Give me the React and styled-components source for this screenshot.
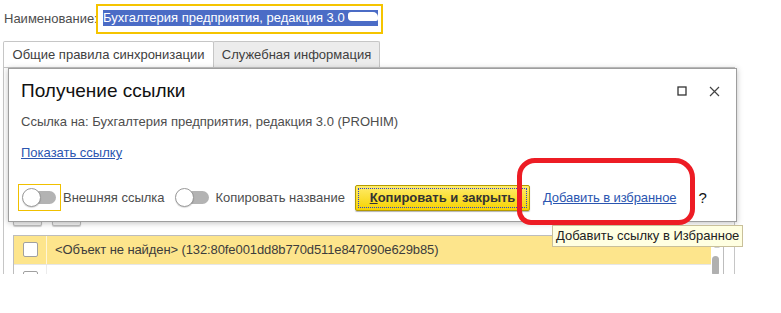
import React from "react";
import styled, {createGlobalStyle} from "styled-components";

const GlobalStyle = createGlobalStyle`
    html, body {
        margin: 0;
        padding: 0;
        background: #fff;
    }
    body {
        font-family: "Liberation Sans", Arial, sans-serif;
        font-size: 13px;
        color: #4d4d4d;
    }
`;

const Page = styled.div`
    position: relative;
    width: 781px;
    height: 313px;
    overflow: hidden;
    background: #fff;
`;

const Form = styled.div`
    display: flex;
    flex-direction: column;
    height: 274px;
    overflow: hidden;
`;

const NameRow = styled.div`
    display: flex;
    align-items: center;
    height: 30px;
    margin-top: 4px;
    padding-left: 4px;
`;

const Label = styled.span`
    width: 92px;
    line-height: 16px;
`;

const NameInput = styled.div`
    box-sizing: border-box;
    width: 287px;
    height: 30px;
    border: 2px solid #f5c400;
    padding: 4px 3px 4px 5px;
    overflow: hidden;
    white-space: nowrap;
`;

const Selection = styled.div`
    display: flex;
    align-items: center;
    height: 16px;
    background: #4b6cc6;
    color: #fff;
    line-height: 16px;
`;

/* white scribble that hides the end of the name in the screenshot */
const Redacted = styled.span`
    display: inline-block;
    width: 32px;
    height: 9px;
    margin: -4px 0 0 3px;
    border-radius: 3px 5px 2px 4px;
    background: #fff;
    color: #fff;
    font-size: 6px;
    line-height: 9px;
    overflow: hidden;
`;

const TabBar = styled.div`
    display: flex;
    height: 26px;
    margin-top: 7px;
    padding-left: 3px;
`;

const Tab = styled.div`
    box-sizing: border-box;
    width: ${({w}) => w}px;
    height: 26px;
    margin-left: ${({first}) => (first ? 0 : -1)}px;
    border: 1px solid #c6c6c6;
    border-bottom: none;
    border-radius: 2px 2px 0 0;
    background: ${({active}) => (active ? "#fff" : "#ececec")};
    color: #404040;
    text-align: center;
    line-height: 25px;
`;

const Panel = styled.div`
    flex: 1;
    margin: 0 46px 0 3px;
    border: 1px solid #c6c6c6;
    border-bottom: none;
    padding: 0 10px 0 9px;
`;

const Toolbar = styled.div`
    display: flex;
    gap: 10px;
    margin-top: 133px;
`;

const ToolButton = styled.div`
    box-sizing: border-box;
    width: 29px;
    height: 25px;
    border: 1px solid #bdbdbd;
    border-radius: 2px;
    background: #f2f2f2;
    box-shadow: 0 1px 1px rgba(0, 0, 0, 0.2);
`;

const Table = styled.div`
    display: flex;
    margin-top: 9px;
    border: 1px solid #bdbdbd;
    border-bottom: none;
    height: 60px;
`;

const Rows = styled.div`
    flex: 1;
`;

const Row = styled.div`
    display: flex;
    height: 28px;
    background: ${({selected}) => (selected ? "#fde58c" : "#fff")};
    border-bottom: 1px solid #e6e6e6;
`;

const CheckCell = styled.div`
    width: 33px;
    padding: 6px 0 0 9px;
    box-sizing: border-box;
    border-right: 1px solid ${({selected}) => (selected ? "#fff6d8" : "#ececec")};
`;

const Checkbox = styled.div`
    box-sizing: border-box;
    width: 15px;
    height: 15px;
    border: 1px solid #a0a0a0;
    border-radius: 2px;
    background: #fff;
`;

const TextCell = styled.div`
    padding-left: 8px;
    line-height: 28px;
    color: #3c3c3c;
    letter-spacing: -0.1px;
`;

const ScrollBar = styled.div`
    width: 12px;
`;

const ScrollArrow = styled.div`
    margin: 9px 0 0 3px;
    width: 0;
    height: 0;
    border-left: 3px solid transparent;
    border-right: 3px solid transparent;
    border-bottom: 3px solid #d0d0d0;
`;

const ScrollThumb = styled.div`
    width: 7px;
    height: 20px;
    margin: 8px 0 0 1px;
    border-radius: 4px;
    background: #b0b0b0;
`;

const Dialog = styled.div`
    position: absolute;
    left: 8px;
    top: 68px;
    box-sizing: border-box;
    width: 729px;
    height: 154px;
    border: 1px solid #9e9e9e;
    background: #fff;
    box-shadow: 0 1px 6px rgba(0, 0, 0, 0.25);
    padding: 10px 16px 0 12px;
    display: flex;
    flex-direction: column;
`;

const Header = styled.div`
    display: flex;
    align-items: center;
    justify-content: space-between;
    height: 24px;
`;

const Title = styled.div`
    font-size: 19px;
    line-height: 24px;
    color: #111;
`;

const WindowButtons = styled.div`
    display: flex;
    align-items: center;
    gap: 22px;
`;

const Text = styled.div`
    margin-top: ${({mt}) => mt}px;
    line-height: 16px;
`;

const Link = styled.a`
    color: #2a55b0;
    text-decoration: underline;
    line-height: 16px;
    cursor: pointer;
`;

const BottomRow = styled.div`
    display: flex;
    align-items: center;
    height: 27px;
    margin-top: 23px;
    margin-left: -3px;
`;

const ToggleGroup = styled.div`
    display: flex;
    align-items: center;
    gap: 2px;
    margin-right: 6px;
`;

const ToggleBox = styled.div`
    position: relative;
    box-sizing: border-box;
    width: 43px;
    height: 27px;
    border: 1px solid ${({focused}) => (focused ? "#f0c000" : "transparent")};
`;

const Track = styled.div`
    position: absolute;
    left: 12px;
    top: 6px;
    width: 25px;
    height: 13px;
    border-radius: 7px;
    background: #b3b3b3;
`;

const Knob = styled.div`
    position: absolute;
    left: 3px;
    top: 3px;
    box-sizing: border-box;
    width: 19px;
    height: 19px;
    border-radius: 50%;
    border: 1px solid #999;
    background: #fff;
    box-shadow: 0 1px 1px rgba(0, 0, 0, 0.15);
`;

const ToggleLabel = styled.span`
    line-height: 16px;
`;

const MainButton = styled.div`
    box-sizing: border-box;
    width: 175px;
    height: 26px;
    margin-left: 4px;
    padding: 2px;
    border: 1px solid #b49a00;
    border-radius: 2px;
    background: linear-gradient(#ffec6b, #f6d200);
    box-shadow: 0 1px 1px rgba(0, 0, 0, 0.3);
`;

const FocusRect = styled.div`
    height: 100%;
    box-sizing: border-box;
    border: 1px dotted #2743d0;
    font-weight: bold;
    color: #333;
    text-align: center;
    line-height: 18px;
    & u {
        text-decoration: underline;
    }
`;

const FavLink = styled(Link)`
    margin-left: 13px;
    letter-spacing: -0.1px;
`;

const Help = styled.span`
    margin-left: 22px;
    font-size: 15px;
    color: #111;
`;

const Annotation = styled.div`
    position: absolute;
    left: 517px;
    top: 158px;
    box-sizing: border-box;
    width: 178px;
    height: 67px;
    border: 5px solid #ed1c24;
    border-radius: 18px 20px 16px 14px;
`;

const Tooltip = styled.div`
    position: absolute;
    left: 552px;
    top: 225px;
    box-sizing: border-box;
    height: 22px;
    padding: 0 3px;
    border: 1px solid #c9c09a;
    background: #ffffe1;
    color: #222;
    line-height: 20px;
    white-space: nowrap;
`;

const MaxIcon = () => (
    <svg width="10" height="10" viewBox="0 0 10 10">
        <rect x="1" y="1" width="8" height="8" fill="none" stroke="#333" strokeWidth="1.3"/>
    </svg>
);

const CloseIcon = () => (
    <svg width="11" height="11" viewBox="0 0 11 11">
        <path d="M1 1 L10 10 M10 1 L1 10" stroke="#444" strokeWidth="1.2"/>
    </svg>
);

const Toggle = ({label, focused}) => (
    <ToggleGroup>
        <ToggleBox focused={focused}>
            <Track/>
            <Knob/>
        </ToggleBox>
        <ToggleLabel>{label}</ToggleLabel>
    </ToggleGroup>
);

export default function App() {
    return (
        <Page>
            <GlobalStyle/>
            <Form>
                <NameRow>
                    <Label>Наименование:</Label>
                    <NameInput>
                        <Selection>
                            Бухгалтерия предприятия, редакция 3.0
                            <Redacted>(PROHIM)</Redacted>
                        </Selection>
                    </NameInput>
                </NameRow>
                <TabBar>
                    <Tab first active w={211}>Общие правила синхронизации</Tab>
                    <Tab w={167}>Служебная информация</Tab>
                </TabBar>
                <Panel>
                    <Toolbar>
                        <ToolButton/>
                        <ToolButton/>
                    </Toolbar>
                    <Table>
                        <Rows>
                            <Row selected>
                                <CheckCell selected><Checkbox/></CheckCell>
                                <TextCell>&lt;Объект не найден&gt; (132:80fe001dd8b770d511e847090e629b85)</TextCell>
                            </Row>
                            <Row>
                                <CheckCell><Checkbox/></CheckCell>
                                <TextCell/>
                            </Row>
                        </Rows>
                        <ScrollBar>
                            <ScrollArrow/>
                            <ScrollThumb/>
                        </ScrollBar>
                    </Table>
                </Panel>
            </Form>

            <Dialog>
                <Header>
                    <Title>Получение ссылки</Title>
                    <WindowButtons>
                        <MaxIcon/>
                        <CloseIcon/>
                    </WindowButtons>
                </Header>
                <Text mt={11}>Ссылка на: Бухгалтерия предприятия, редакция 3.0 (PROHIM)</Text>
                <Text mt={15}><Link>Показать ссылку</Link></Text>
                <BottomRow>
                    <Toggle focused label="Внешняя ссылка"/>
                    <Toggle label="Копировать название"/>
                    <MainButton>
                        <FocusRect><u>К</u>опировать и закрыть</FocusRect>
                    </MainButton>
                    <FavLink>Добавить в избранное</FavLink>
                    <Help>?</Help>
                </BottomRow>
            </Dialog>

            <Annotation/>
            <Tooltip>Добавить ссылку в Избранное</Tooltip>
        </Page>
    );
}
